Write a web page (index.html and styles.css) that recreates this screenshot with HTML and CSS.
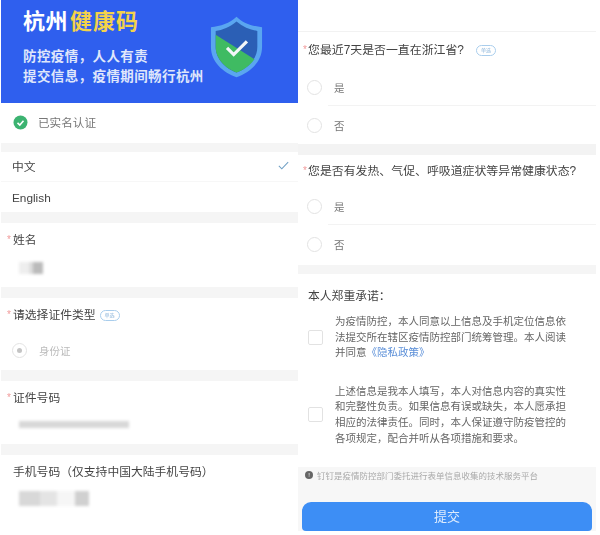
FILE: index.html
```html
<!DOCTYPE html>
<html lang="zh-CN">
  <head>
    <title>杭州健康码</title>
    <meta charset="utf-8" />
    <link rel="stylesheet" href="styles.css">
  </head>
  <body>
    <div class="page">
      <div class="column left">
        <div class="banner">
          <div class="banner-text">
            <h1 class="banner-title">杭州<span class="yellow">健康码</span></h1>
            <p class="banner-line">防控疫情，人人有责</p>
            <p class="banner-line">提交信息，疫情期间畅行杭州</p>
          </div>
          <svg class="shield" width="53" height="64" viewBox="0 0 56 66">
            <path d="M28 1 C35 8 45 11 55 12 L55 33 C55 49 42 60 28 65 C14 60 1 49 1 33 L1 12 C11 11 21 8 28 1Z" fill="#5aa6f0"/>
            <path d="M28 6 C35 12 43 15 50 16 L50 33 C50 46 39 56 28 60 C17 56 6 46 6 33 L6 16 C13 15 21 12 28 6Z" fill="#2b5fb5"/>
            <path d="M6 20 L47 46 C41 54 34 58 28 60 C17 56 6 46 6 33Z" fill="#3fbb62"/>
            <path d="M18 34 L25 41 L39 27" fill="none" stroke="#f2f6f8" stroke-width="3.4"/>
          </svg>
        </div>
        <div class="verified">
          <svg width="15" height="15" viewBox="0 0 15 15">
            <circle cx="7.5" cy="7.5" r="7" fill="#3cb371"/>
            <path d="M4.5 7.8 L6.8 10 L10.5 5.8" fill="none" stroke="#fff" stroke-width="1.6"/>
          </svg>
          <span>已实名认证</span>
        </div>
        <div class="lang lang-first">中文
          <svg width="11" height="9" viewBox="0 0 13 10"><path d="M1 5.5 L4.5 9 L12 1" fill="none" stroke="#6f9fc4" stroke-width="1.2"/></svg>
        </div>
        <div class="lang lang-second">English</div>
        <div class="field field-name">
          <div class="label"><span class="star">*</span>姓名</div>
          <div class="mosaic mosaic-name"></div>
        </div>
        <div class="field field-type">
          <div class="label"><span class="star">*</span>请选择证件类型<span class="tag">单选</span></div>
          <div class="option option-off">
            <span class="radio radio-on"></span>
            <span>身份证</span>
          </div>
        </div>
        <div class="field field-id">
          <div class="label"><span class="star">*</span>证件号码</div>
          <div class="mosaic mosaic-id"></div>
        </div>
        <div class="field field-phone">
          <div class="label label-plain">手机号码（仅支持中国大陆手机号码）</div>
          <div class="mosaic mosaic-phone"></div>
        </div>
      </div>

      <div class="column right">
        <div class="top-blank"></div>
        <div class="question q-first">
          <div class="label"><span class="star">*</span>您最近7天是否一直在浙江省?<span class="tag tag-wide">单选</span></div>
          <div class="option"><span class="radio"></span><span>是</span></div>
          <div class="option option-last"><span class="radio"></span><span>否</span></div>
        </div>
        <div class="question q-second">
          <div class="label"><span class="star">*</span>您是否有发热、气促、呼吸道症状等异常健康状态?</div>
          <div class="option"><span class="radio"></span><span>是</span></div>
          <div class="option option-last"><span class="radio"></span><span>否</span></div>
        </div>
        <div class="promise">
          <div class="promise-title">本人郑重承诺：</div>
          <div class="check-row">
            <span class="checkbox"></span>
            <p>为疫情防控，本人同意以上信息及手机定位信息依法提交所在辖区疫情防控部门统筹管理。本人阅读并同意<a class="link">《隐私政策》</a></p>
          </div>
          <div class="check-row">
            <span class="checkbox"></span>
            <p>上述信息是我本人填写，本人对信息内容的真实性和完整性负责。如果信息有误或缺失，本人愿承担相应的法律责任。同时，本人保证遵守防疫管控的各项规定，配合并听从各项措施和要求。</p>
          </div>
        </div>
        <div class="footer">
          <div class="notice"><span class="info">!</span>钉钉是疫情防控部门委托进行表单信息收集的技术服务平台</div>
          <div class="submit">提交</div>
        </div>
      </div>
    </div>
  </body>
</html>
```

FILE: styles.css
```css
* {
  box-sizing: border-box;
}

html,
body {
  margin: 0;
  background-color: #fff;
}

body {
  font-family: "Liberation Sans", "Noto Sans CJK SC", sans-serif;
  color: #333;
}

.page {
  display: flex;
  width: 600px;
  height: 535px;
  overflow: hidden;
  padding-left: 1px;
  filter: blur(0.35px);
}

.column {
  display: flex;
  flex-direction: column;
  flex: none;
}

.left {
  width: 297px;
}

.right {
  width: 298px;
}

/* banner */
.banner {
  display: flex;
  justify-content: space-between;
  height: 103px;
  padding: 9px 9px 0 22px;
  background-color: #2f5fee;
  flex: none;
}

.banner-title {
  margin: 0 0 12px;
  font-size: 22px;
  line-height: 26px;
  color: #fff;
  font-weight: bold;
  letter-spacing: 0.5px;
}

.yellow {
  color: #f3d24a;
  margin-left: 2px;
  letter-spacing: 1px;
}

.banner-line {
  margin: 0;
  font-size: 13.5px;
  line-height: 20px;
  font-weight: bold;
  color: #dfe6fb;
  letter-spacing: 0.4px;
}

.shield {
  margin: 6px 26px 0 0;
  flex: none;
}

.verified {
  display: flex;
  align-items: center;
  gap: 10px;
  height: 40px;
  flex: none;
  padding: 0 0 2px 12px;
  font-size: 11.6px;
  color: #777;
}

/* language list */
.lang {
  display: flex;
  justify-content: space-between;
  align-items: center;
  height: 30px;
  flex: none;
  padding: 0 9px 2px 11px;
  font-size: 11.8px;
  color: #444;
}

.lang-first {
  height: 39px;
  border-top: 9px solid #f5f5f5;
  border-bottom: 1px solid #f7f7f7;
}

.lang-second {
  padding-bottom: 0;
  padding-top: 2px;
}

/* form fields */
.field {
  flex: none;
  border-top: 11px solid #f5f5f5;
  padding: 9px 0 0 6px;
}

.field-name {
  height: 75px;
}

.field-type {
  height: 83px;
}

.field-id {
  height: 74px;
}

.field-phone {
  height: 75px;
}

.label {
  display: flex;
  align-items: center;
  font-size: 11.8px;
  line-height: 16px;
  color: #444;
}

.label-plain {
  padding-left: 6px;
}

.star {
  width: 6px;
  color: #f19a9a;
  font-size: 10px;
}

.tag {
  width: 20px;
  height: 11px;
  margin-left: 4px;
  border: 1px solid #a9cdec;
  border-radius: 6px;
  color: #8cb5da;
  font-size: 5px;
  line-height: 9px;
  text-align: center;
}

.tag-wide {
  margin-left: 12px;
}

.mosaic {
  filter: blur(1.5px);
  margin-left: 12px;
}

.mosaic-name {
  width: 24px;
  height: 12px;
  margin-top: 14px;
  background: linear-gradient(90deg, #eee 0 40%, #ddd 40% 60%, #bbb 60%);
}

.mosaic-id {
  width: 110px;
  height: 7px;
  margin-top: 15px;
  background-color: #d8d8d8;
}

.mosaic-phone {
  width: 70px;
  height: 15px;
  margin-top: 11px;
  background: linear-gradient(90deg, #d8d8d8 0 30%, #e4e4e4 30% 55%, #f6f6f6 55% 80%, #d0d0d0 80%);
}

/* options */
.option {
  display: flex;
  align-items: center;
  gap: 12px;
  height: 38px;
  font-size: 10.5px;
  color: #777;
}

.option-off {
  margin: 8px 0 0 5px;
  color: #bbb;
}

.radio {
  display: flex;
  align-items: center;
  justify-content: center;
  width: 15px;
  height: 15px;
  border: 1px solid #e2e2e2;
  border-radius: 50%;
  flex: none;
}

.radio-on::after {
  content: "";
  width: 5px;
  height: 5px;
  border-radius: 50%;
  background-color: #c4c4c4;
}

/* right column */
.top-blank {
  height: 32px;
  flex: none;
  border-bottom: 1px solid #f2f2f2;
}

.question {
  flex: none;
  padding-left: 5px;
}

.question .label {
  font-size: 11.9px;
}

.q-first {
  height: 123px;
  padding-top: 10px;
  border-bottom: 11px solid #f3f3f3;
}

.q-first .label {
  margin-bottom: 10px;
}

.q-second {
  height: 119px;
  padding-top: 8px;
  border-bottom: 9px solid #f5f5f5;
}

.q-second .label {
  margin-bottom: 8px;
}

.question .label .star {
  width: 5px;
  font-size: 10px;
}

.question .option {
  padding-left: 4px;
  background: linear-gradient(#f3f3f3, #f3f3f3) no-repeat 25px 100% / 100% 1px;
}

.question .option-last {
  background: none;
}

.promise {
  height: 193px;
  flex: none;
  padding: 14px 0 0 10px;
}

.promise-title {
  font-size: 11.8px;
  line-height: 16px;
  margin-bottom: 10px;
  color: #444;
}

.check-row {
  display: flex;
  align-items: center;
  margin-bottom: 23px;
}

.check-row p {
  margin: 0;
  width: 236px;
  font-size: 10.5px;
  line-height: 15.6px;
  color: #666;
}

.checkbox {
  width: 15px;
  height: 15px;
  margin-right: 12px;
  border: 1px solid #e2e2e2;
  border-radius: 2px;
  flex: none;
}

.link {
  color: #5b8fd8;
}

.footer {
  height: 64px;
  flex: none;
  padding: 0 4px;
  background-color: #f7f7f7;
}

.notice {
  display: flex;
  align-items: center;
  height: 15px;
  padding-left: 3px;
  font-size: 8.5px;
  color: #aaa;
}

.info {
  width: 8px;
  height: 8px;
  margin-right: 4px;
  border-radius: 50%;
  background-color: #666;
  color: #fff;
  font-size: 6px;
  line-height: 8px;
  text-align: center;
}

.submit {
  width: 290px;
  height: 29px;
  margin-top: 20px;
  border-radius: 9px 9px 4px 4px;
  background-color: #3d8ef5;
  color: #dcebfd;
  font-size: 13px;
  line-height: 29px;
  text-align: center;
}
```
